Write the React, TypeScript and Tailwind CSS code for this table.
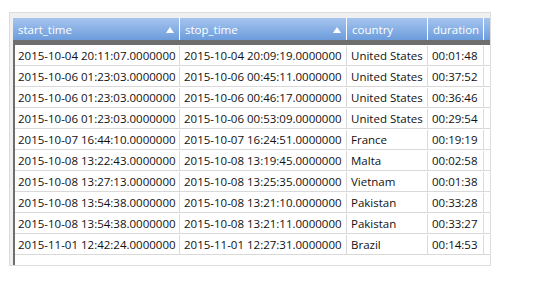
const COLS = [
  { key: 'start_time', w: 'w-[167px]', sort: true },
  { key: 'stop_time', w: 'w-[167px]', sort: true },
  { key: 'country', w: 'w-[81px]', sort: false },
  { key: 'duration', w: 'w-[56px]', sort: false },
];

const ROWS: string[][] = [
  ['2015-10-04 20:11:07.0000000', '2015-10-04 20:09:19.0000000', 'United States', '00:01:48'],
  ['2015-10-06 01:23:03.0000000', '2015-10-06 00:45:11.0000000', 'United States', '00:37:52'],
  ['2015-10-06 01:23:03.0000000', '2015-10-06 00:46:17.0000000', 'United States', '00:36:46'],
  ['2015-10-06 01:23:03.0000000', '2015-10-06 00:53:09.0000000', 'United States', '00:29:54'],
  ['2015-10-07 16:44:10.0000000', '2015-10-07 16:24:51.0000000', 'France', '00:19:19'],
  ['2015-10-08 13:22:43.0000000', '2015-10-08 13:19:45.0000000', 'Malta', '00:02:58'],
  ['2015-10-08 13:27:13.0000000', '2015-10-08 13:25:35.0000000', 'Vietnam', '00:01:38'],
  ['2015-10-08 13:54:38.0000000', '2015-10-08 13:21:10.0000000', 'Pakistan', '00:33:28'],
  ['2015-10-08 13:54:38.0000000', '2015-10-08 13:21:11.0000000', 'Pakistan', '00:33:27'],
  ['2015-11-01 12:42:24.0000000', '2015-11-01 12:27:31.0000000', 'Brazil', '00:14:53'],
];

function SortArrow() {
  return (
    <svg width="8" height="6" viewBox="0 0 8 6" className="shrink-0">
      <path d="M4 0 L8 6 L0 6 Z" fill="#ffffff" />
    </svg>
  );
}

export default function App() {
  return (
    <div className="h-[286px] w-[551px] bg-white pl-[9px] pt-[12px] font-['Open_Sans',sans-serif] text-[11.5px]">
      <div className="flex h-[254px] w-[482px] flex-col border border-[#dcdcdc] bg-[#f0f0f0] pl-[3px] pt-[5px]">
        {/* header */}
        <div className="flex h-[22px] shrink-0 bg-gradient-to-b from-[#a6c5ee] to-[#6c9cdc] text-white">
          {COLS.map((c) => (
            <div
              key={c.key}
              className={`${c.w} flex items-center justify-between border-r border-white pl-[5px] pr-[5px] pt-[1px]`}
            >
              <span>{c.key}</span>
              {c.sort && <SortArrow />}
            </div>
          ))}
          <div className="flex-1" />
        </div>
        <div className="h-[5px] shrink-0 bg-[#6e6e6e]" />

        {/* body */}
        <div className="flex-1 border-l-2 border-[#6e6e6e] bg-white text-[#111]">
          {ROWS.map((r, i) => (
            <div key={i} className="flex h-[21px] border-b border-[#d9d9d9] pt-[1px]">
              <div className="flex w-[165px] items-center border-r border-[#d9d9d9] pl-[3px]">{r[0]}</div>
              <div className="flex w-[167px] items-center border-r border-[#d9d9d9] pl-[4px]">{r[1]}</div>
              <div className="flex w-[81px] items-center border-r border-[#d9d9d9] pl-[4px]">{r[2]}</div>
              <div className="flex w-[56px] items-center border-r border-[#d9d9d9] pl-[4px]">{r[3]}</div>
              <div className="flex-1" />
            </div>
          ))}
        </div>
      </div>
    </div>
  );
}
